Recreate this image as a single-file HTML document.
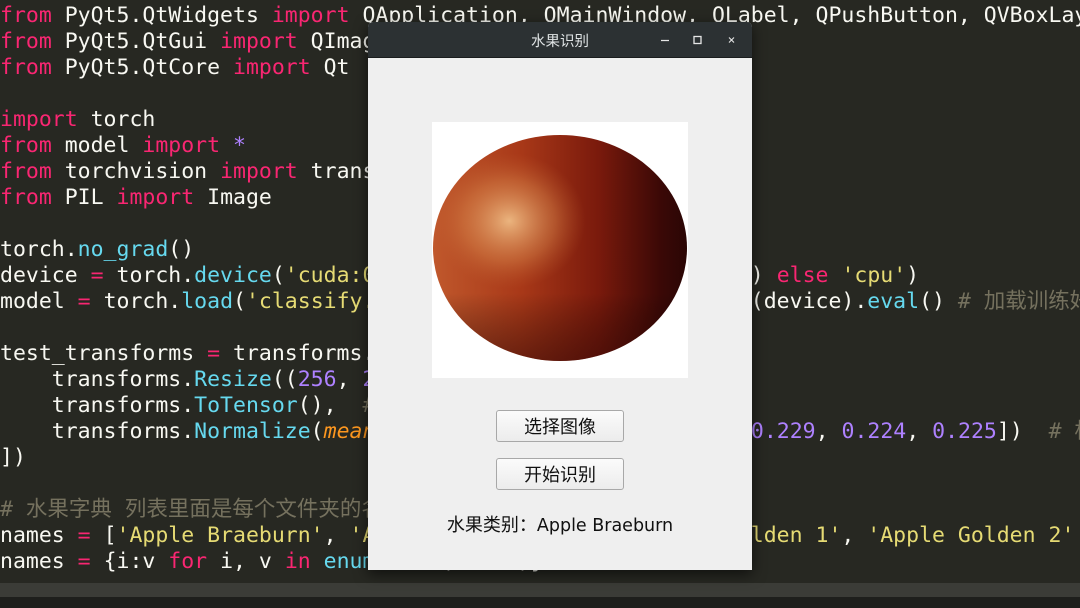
<!DOCTYPE html>
<html><head><meta charset="utf-8"><style>
html,body{margin:0;padding:0;width:1080px;height:608px;overflow:hidden;background:#272822;position:relative}
pre{margin:0;position:absolute;left:0;top:3px;width:1080px;height:580px;overflow:hidden;font-family:"DejaVu Sans Mono","Noto Sans CJK SC",monospace;font-size:21.5px;line-height:26px;color:#f8f8f2;white-space:pre}
.k{color:#f92672}.f{color:#66d9ef}.s{color:#e6db74}.n{color:#ae81ff}.c{color:#75715e}.a{color:#fd971f;font-style:italic}
.bar1{position:absolute;left:0;top:583px;width:1080px;height:14px;background:#3b3c37}
.bar2{position:absolute;left:0;top:597px;width:1080px;height:11px;background:#1e1f1c}
.win{position:absolute;left:368px;top:22px;width:384px;height:548px;background:#efefef;box-shadow:0 4px 14px rgba(0,0,0,.6);border-radius:5px 5px 0 0;overflow:hidden}
.tb{height:35px;background:#2c3133;color:#dfe3e4;font-family:"Noto Sans CJK SC",sans-serif;font-size:14.5px;text-align:center;line-height:37px;border-bottom:1px solid #1a1d1e}
.btn{position:absolute;left:128px;width:126px;height:30px;border:1px solid #a8a8a8;border-radius:3px;background:linear-gradient(#fbfbfb,#ececec);font-family:"Noto Sans CJK SC",sans-serif;font-size:18px;text-align:center;line-height:30px;color:#111}
.lbl{position:absolute;left:0;width:384px;top:489px;text-align:center;font-family:"Noto Sans CJK SC",sans-serif;font-size:18px;color:#111}
</style></head><body>
<pre><span class="k">from</span> PyQt5.QtWidgets <span class="k">import</span> QApplication, QMainWindow, QLabel, QPushButton, QVBoxLayout
<span class="k">from</span> PyQt5.QtGui <span class="k">import</span> QImage, QPixmap
<span class="k">from</span> PyQt5.QtCore <span class="k">import</span> Qt

<span class="k">import</span> torch
<span class="k">from</span> model <span class="k">import</span> <span class="n">*</span>
<span class="k">from</span> torchvision <span class="k">import</span> transforms
<span class="k">from</span> PIL <span class="k">import</span> Image

torch.<span class="f">no_grad</span>()
device <span class="k">=</span> torch.<span class="f">device</span>(<span class="s">'cuda:0'</span> <span class="k">if</span> torch.cuda.is_available() <span class="k">else</span> <span class="s">'cpu'</span>)
model <span class="k">=</span> torch.<span class="f">load</span>(<span class="s">'classify.pth'</span>, map_location=device).<span class="f">to</span>(device).<span class="f">eval</span>() <span class="c"># 加载训练好的模型</span>

test_transforms <span class="k">=</span> transforms.<span class="f">Compose</span>([
    transforms.<span class="f">Resize</span>((<span class="n">256</span>, <span class="n">256</span>)),
    transforms.<span class="f">ToTensor</span>(),  <span class="c"># 转换为张量</span>
    transforms.<span class="f">Normalize</span>(<span class="a">mean</span><span class="k">=</span>[<span class="n">0.485</span>, <span class="n">0.456</span>, <span class="n">0.406</span>], <span class="a">std</span><span class="k">=</span>[<span class="n">0.229</span>, <span class="n">0.224</span>, <span class="n">0.225</span>])  <span class="c"># 标准化</span>
])

<span class="c"># 水果字典 列表里面是每个文件夹的名字</span>
names <span class="k">=</span> [<span class="s">'Apple Braeburn'</span>, <span class="s">'Apple Crimson Snow'</span>, <span class="s">'Apple Golden 1'</span>, <span class="s">'Apple Golden 2'</span>
names <span class="k">=</span> {i:v <span class="k">for</span> i, v <span class="k">in</span> <span class="f">enumerate</span>(names)}</pre>
<div class="bar1"></div><div class="bar2"></div>
<div class="win">
<div class="tb">水果识别
<svg style="position:absolute;left:290px;top:12px" width="90" height="14"><line x1="3" y1="6.5" x2="11" y2="6.5" stroke="#e6e6e6" stroke-width="1.3"/><rect x="36" y="2.5" width="7" height="7" fill="none" stroke="#e6e6e6" stroke-width="1.3"/><path d="M71 3.5L76 8.5M76 3.5L71 8.5" stroke="#e6e6e6" stroke-width="1.1"/></svg>
</div>
<svg style="position:absolute;left:64px;top:100px" width="256" height="256">
<defs>
<linearGradient id="g" x1="0" y1="0" x2="1" y2="0"><stop offset="0" stop-color="#c0582c"/><stop offset=".35" stop-color="#a83818"/><stop offset=".65" stop-color="#7a1a0c"/><stop offset=".9" stop-color="#3a0806"/><stop offset="1" stop-color="#2a0605"/></linearGradient>
<radialGradient id="h" cx=".3" cy=".38" r=".3"><stop offset="0" stop-color="#f2c28a" stop-opacity=".9"/><stop offset=".6" stop-color="#d8884c" stop-opacity=".45"/><stop offset="1" stop-color="#c06030" stop-opacity="0"/></radialGradient>
<linearGradient id="v" x1="0" y1="0" x2="0" y2="1"><stop offset=".7" stop-color="#000" stop-opacity="0"/><stop offset="1" stop-color="#2a0505" stop-opacity=".5"/></linearGradient>
</defs>
<rect width="256" height="256" fill="#fff"/>
<ellipse cx="128" cy="126" rx="127" ry="113" fill="url(#g)"/>
<ellipse cx="128" cy="126" rx="127" ry="113" fill="url(#h)"/>
<ellipse cx="128" cy="126" rx="127" ry="113" fill="url(#v)"/>
</svg>
<div class="btn" style="top:388px">选择图像</div>
<div class="btn" style="top:436px">开始识别</div>
<div class="lbl">水果类别：<span style="font-family:'DejaVu Sans','Noto Sans CJK SC',sans-serif;font-size:17.5px">Apple Braeburn</span></div>
</div>
</body></html>
